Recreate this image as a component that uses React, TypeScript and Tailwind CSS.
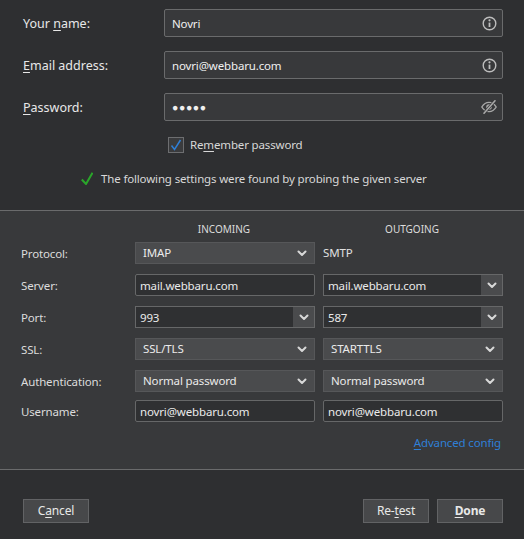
import React from "react";

const Chevron = () => (
  <svg width="10" height="7" viewBox="0 0 10 7" fill="none" stroke="#d8d8d8" strokeWidth="2" strokeLinecap="round" strokeLinejoin="round">
    <path d="M1.5 1.5 L5 5 L8.5 1.5" />
  </svg>
);

const Info = () => (
  <svg width="15" height="15" viewBox="0 0 15 15" fill="none" stroke="#bdbdbd">
    <circle cx="7.5" cy="7.5" r="6.3" strokeWidth="1.4" />
    <path d="M7.5 6.6 V11" strokeWidth="1.8" />
    <circle cx="7.5" cy="4.3" r="1.1" fill="#bdbdbd" stroke="none" />
  </svg>
);

const EyeOff = () => (
  <svg width="16" height="14" viewBox="0 0 16 14" fill="none" stroke="#a8a8a8" strokeWidth="1.4" strokeLinecap="round">
    <path d="M0.8 7 C3 3.4 5.4 2.4 8 2.4 C10.6 2.4 13 3.4 15.2 7 C13 10.6 10.6 11.6 8 11.6 C5.4 11.6 3 10.6 0.8 7 Z" />
    <circle cx="8" cy="7" r="2.8" fill="#a8a8a8" stroke="none" />
    <path d="M3 13.2 L14 0.8" stroke="#38393b" strokeWidth="3" />
    <path d="M3 13.2 L14 0.8" stroke="#a8a8a8" strokeWidth="1.6" />
  </svg>
);

const U = ({ children }: { children: React.ReactNode }) => <span className="underline underline-offset-2">{children}</span>;

const TopField = ({ value, icon }: { value: React.ReactNode; icon: React.ReactNode }) => (
  <div className="flex h-[28px] w-[339px] items-center justify-between rounded-[2px] border border-[#6a6b6c] bg-[#38393b] pl-[7px] pr-[5px] text-[11.5px] tracking-[-0.15px] text-[#f0f0f0]">
    <span>{value}</span>
    <span className="flex">{icon}</span>
  </div>
);

const TopRow = ({ label, children, className }: { label: React.ReactNode; children: React.ReactNode; className?: string }) => (
  <div className={`flex items-center ${className ?? ""}`}>
    <div className="w-[141px] pt-[2px] text-[12.5px] text-[#e8e8e8]">{label}</div>
    {children}
  </div>
);

const Select = ({ value }: { value: string }) => (
  <div className="flex h-[22px] w-[180px] items-center justify-between border border-[#565759] bg-[#4a4b4d] pl-[7px] pr-[7px] text-[11.5px] tracking-[-0.15px] text-[#eaeaea]">
    <span>{value}</span>
    <Chevron />
  </div>
);

const Input = ({ value }: { value: string }) => (
  <div className="flex h-[22px] w-[180px] items-center rounded-[2px] border border-[#666768] bg-[#2f3032] pl-[4px] pt-[1px] text-[11.5px] tracking-[-0.15px] text-[#eaeaea]">
    {value}
  </div>
);

const Combo = ({ value }: { value: string }) => (
  <div className="flex h-[22px] w-[180px] border border-[#666768] bg-[#2f3032] text-[11.5px] tracking-[-0.15px] text-[#eaeaea]">
    <span className="flex flex-1 items-center pl-[4px] pt-[1px]">{value}</span>
    <span className="flex w-[21px] items-center justify-center bg-[#4a4b4d]">
      <Chevron />
    </span>
  </div>
);

const Label = ({ children }: { children: React.ReactNode }) => (
  <div className="flex h-[22px] w-[114px] items-center pt-[1px] text-[11.5px] tracking-[-0.15px] text-[#dcdcdc]">{children}</div>
);

const Btn = ({ children, className }: { children: React.ReactNode; className?: string }) => (
  <div className={`flex h-[24px] w-[66px] items-center justify-center border border-[#626365] bg-[#47484a] text-[12px] tracking-[-0.15px] text-[#e8e8e8] ${className ?? ""}`}>
    {children}
  </div>
);

export default function App() {
  return (
    <div className="flex h-[539px] w-[524px] flex-col overflow-hidden bg-[#2e2f31] font-['Noto_Sans','Open_Sans',sans-serif]">
      <div className="h-[210px] shrink-0 pl-[23px] pt-[9px]">
        <TopRow label={<>Your <U>n</U>ame:</>}>
          <TopField value={<span className="block pt-[1px]">Novri</span>} icon={<Info />} />
        </TopRow>
        <TopRow label={<><U>E</U>mail address:</>} className="mt-[14px]">
          <TopField value={<span className="block pt-[1px]">novri@webbaru.com</span>} icon={<Info />} />
        </TopRow>
        <TopRow label={<><U>P</U>assword:</>} className="mt-[14px]">
          <TopField value={<span className="text-[10.5px] leading-none tracking-[0.6px]">●●●●●</span>} icon={<EyeOff />} />
        </TopRow>
        <div className="ml-[145px] mt-[15px] flex items-center gap-[6px] text-[11.5px] tracking-[-0.15px] text-[#d8d8d8]">
          <span className="flex h-[16px] w-[16px] items-center justify-center border border-[#6d6e70] bg-[#3a3b3d]">
            <svg width="12" height="12" viewBox="0 0 12 12" fill="none" stroke="#2f7fd6" strokeWidth="1.5">
              <path d="M1.5 6.5 L4.5 10.5 L10.5 1" />
            </svg>
          </span>
          <span>Re<U>m</U>ember password</span>
        </div>
        <div className="ml-[58px] mt-[17px] flex items-center gap-[8px] text-[11.5px] tracking-[-0.15px] text-[#d8d8d8]">
          <svg width="12" height="13" viewBox="0 0 12 13" fill="none" stroke="#2aa52a" strokeWidth="2">
            <path d="M0.8 7.5 L5 12 L11.5 0.8" />
          </svg>
          <span>The following settings were found by probing the given server</span>
        </div>
      </div>

      <div className="h-[260px] shrink-0 border-y border-[#6a6b6c] bg-[#38393b] pl-[21px]">
        <div className="flex h-[31px] items-end pb-[5px] text-[10px] text-[#dcdcdc]">
          <div className="w-[113px]" />
          <div className="w-[180px] text-center">INCOMING</div>
          <div className="ml-[8px] w-[180px] text-center">OUTGOING</div>
        </div>
        <div className="flex flex-col gap-[10px]">
          <div className="flex gap-[8px]">
            <div className="flex">
              <Label>Protocol:</Label>
              <Select value="IMAP" />
            </div>
            <div className="flex items-center text-[11.5px] tracking-[-0.15px] text-[#e0e0e0]">SMTP</div>
          </div>
          <div className="flex gap-[8px]">
            <div className="flex">
              <Label>Server:</Label>
              <Input value="mail.webbaru.com" />
            </div>
            <Combo value="mail.webbaru.com" />
          </div>
          <div className="flex gap-[8px]">
            <div className="flex">
              <Label>Port:</Label>
              <Combo value="993" />
            </div>
            <Combo value="587" />
          </div>
          <div className="flex gap-[8px]">
            <div className="flex">
              <Label>SSL:</Label>
              <Select value="SSL/TLS" />
            </div>
            <Select value="STARTTLS" />
          </div>
          <div className="flex gap-[8px]">
            <div className="flex">
              <Label>Authentication:</Label>
              <Select value="Normal password" />
            </div>
            <Select value="Normal password" />
          </div>
          <div className="-mt-[2px] flex gap-[8px]">
            <div className="flex">
              <Label>Username:</Label>
              <Input value="novri@webbaru.com" />
            </div>
            <Input value="novri@webbaru.com" />
          </div>
        </div>
        <div className="mr-[23px] mt-[12px] text-right text-[11.5px] tracking-[-0.15px] text-[#2f7fd6]">
          <U>A</U>dvanced config
        </div>
      </div>

      <div className="flex justify-between pl-[23px] pr-[21px] pt-[29px]">
        <Btn>C<U>a</U>ncel</Btn>
        <div className="flex gap-[8px]">
          <Btn>Re-<U>t</U>est</Btn>
          <Btn className="font-bold"><U>D</U>one</Btn>
        </div>
      </div>
    </div>
  );
}
